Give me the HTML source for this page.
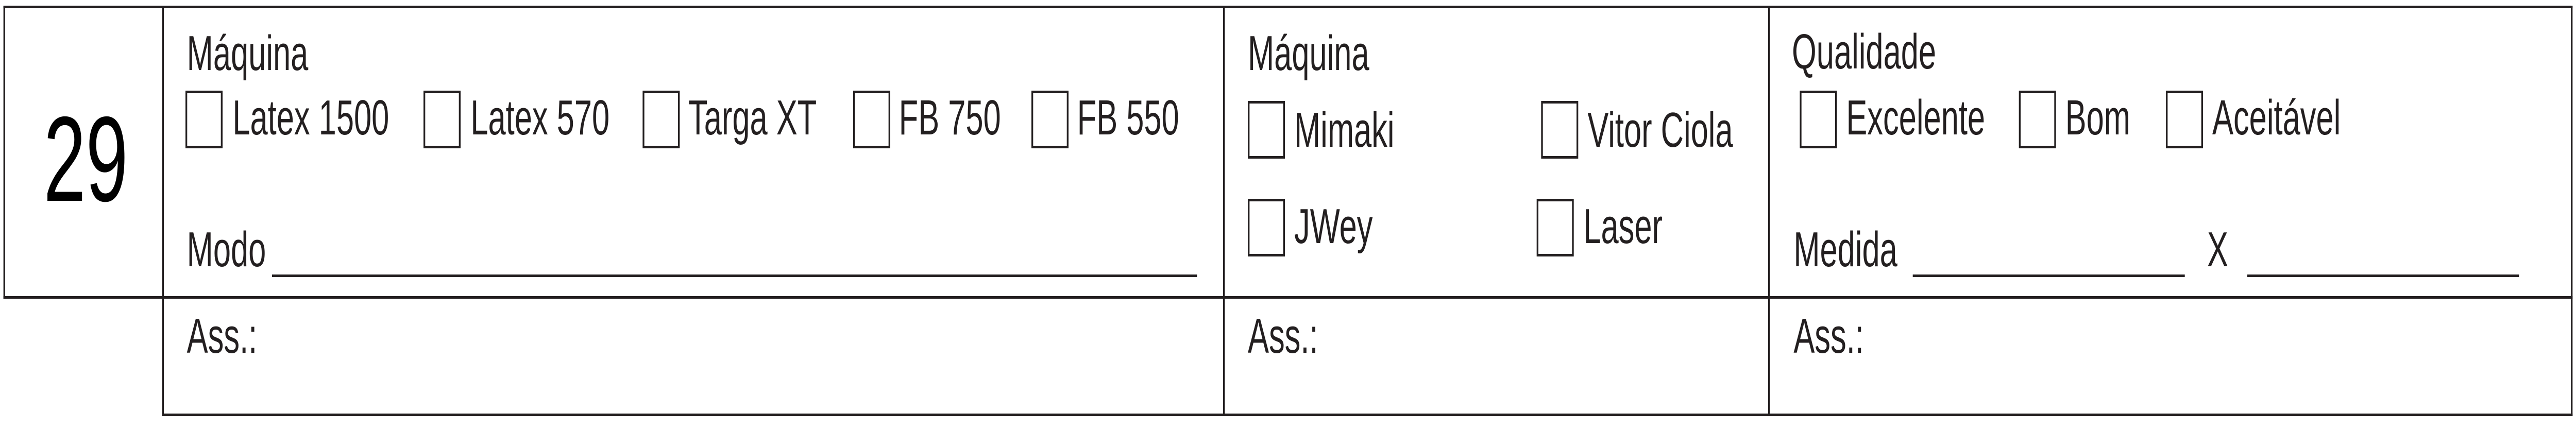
<!DOCTYPE html>
<html><head><meta charset="utf-8"><style>
html,body{margin:0;padding:0;background:#fff;overflow:hidden;width:100%;height:100%;}
svg{display:block;width:100vw;height:100vh;}
text{font-family:"Liberation Sans",sans-serif;font-size:96px;fill:#231f20;}
</style></head><body>
<svg viewBox="0 0 7500 833" preserveAspectRatio="none" xmlns="http://www.w3.org/2000/svg">
<rect width="7500" height="833" fill="#fff"/>
<g fill="#231f20">
<rect x="10" y="11" width="7480" height="5"/>
<rect x="10" y="575" width="7480" height="5"/>
<rect x="472" y="803" width="7018" height="5"/>
<rect x="10" y="11" width="5" height="569"/>
<rect x="472" y="11" width="5" height="797"/>
<rect x="3561" y="11" width="5" height="797"/>
<rect x="5148" y="11" width="5" height="797"/>
<rect x="7485" y="11" width="5" height="797"/>
<rect x="792" y="533" width="2693" height="5"/>
<rect x="5569" y="533" width="792" height="5"/>
<rect x="6543" y="533" width="791" height="5"/>
</g>
<g fill="none" stroke="#231f20" stroke-width="5">
<rect x="542.5" y="178.5" width="103" height="107"/>
<rect x="1235.5" y="178.5" width="103" height="107"/>
<rect x="1873.5" y="178.5" width="103" height="107"/>
<rect x="2486.5" y="178.5" width="103" height="107"/>
<rect x="3005.5" y="178.5" width="103" height="107"/>
<rect x="3635.5" y="198.5" width="103" height="107"/>
<rect x="4489.5" y="198.5" width="103" height="107"/>
<rect x="3635.5" y="388.5" width="103" height="107"/>
<rect x="4476.5" y="388.5" width="103" height="107"/>
<rect x="5242.5" y="178.5" width="103" height="107"/>
<rect x="5880.5" y="178.5" width="103" height="107"/>
<rect x="6308.5" y="178.5" width="103" height="107"/>
</g>
<text transform="translate(127,390) scale(.94,1)" style="font-size:235px;fill:#000">29</text>
<text transform="translate(544,136) scale(.96,1)">Máquina</text>
<text transform="translate(677,261) scale(.96,1)">Latex 1500</text>
<text transform="translate(1370,261) scale(.96,1)">Latex 570</text>
<text transform="translate(2004,261) scale(.96,1)">Targa XT</text>
<text transform="translate(2617,261) scale(.96,1)">FB 750</text>
<text transform="translate(3136,261) scale(.96,1)">FB 550</text>
<text transform="translate(544,517) scale(.96,1)">Modo</text>
<text transform="translate(544,685) scale(.96,1)">Ass.:</text>
<text transform="translate(3633,136) scale(.96,1)">Máquina</text>
<text transform="translate(3768,285) scale(.96,1)">Mimaki</text>
<text transform="translate(4622,285) scale(.96,1)">Vitor Ciola</text>
<text transform="translate(3768,472) scale(.96,1)">JWey</text>
<text transform="translate(4610,472) scale(.96,1)">Laser</text>
<text transform="translate(3633,685) scale(.96,1)">Ass.:</text>
<text transform="translate(5217,133) scale(.96,1)">Qualidade</text>
<text transform="translate(5375,261) scale(.96,1)">Excelente</text>
<text transform="translate(6013,261) scale(.96,1)">Bom</text>
<text transform="translate(6441,261) scale(.96,1)">Aceitável</text>
<text transform="translate(5222,517) scale(.96,1)">Medida</text>
<text transform="translate(6426,517) scale(.96,1)">X</text>
<text transform="translate(5222,685) scale(.96,1)">Ass.:</text>
</svg>
</body></html>
